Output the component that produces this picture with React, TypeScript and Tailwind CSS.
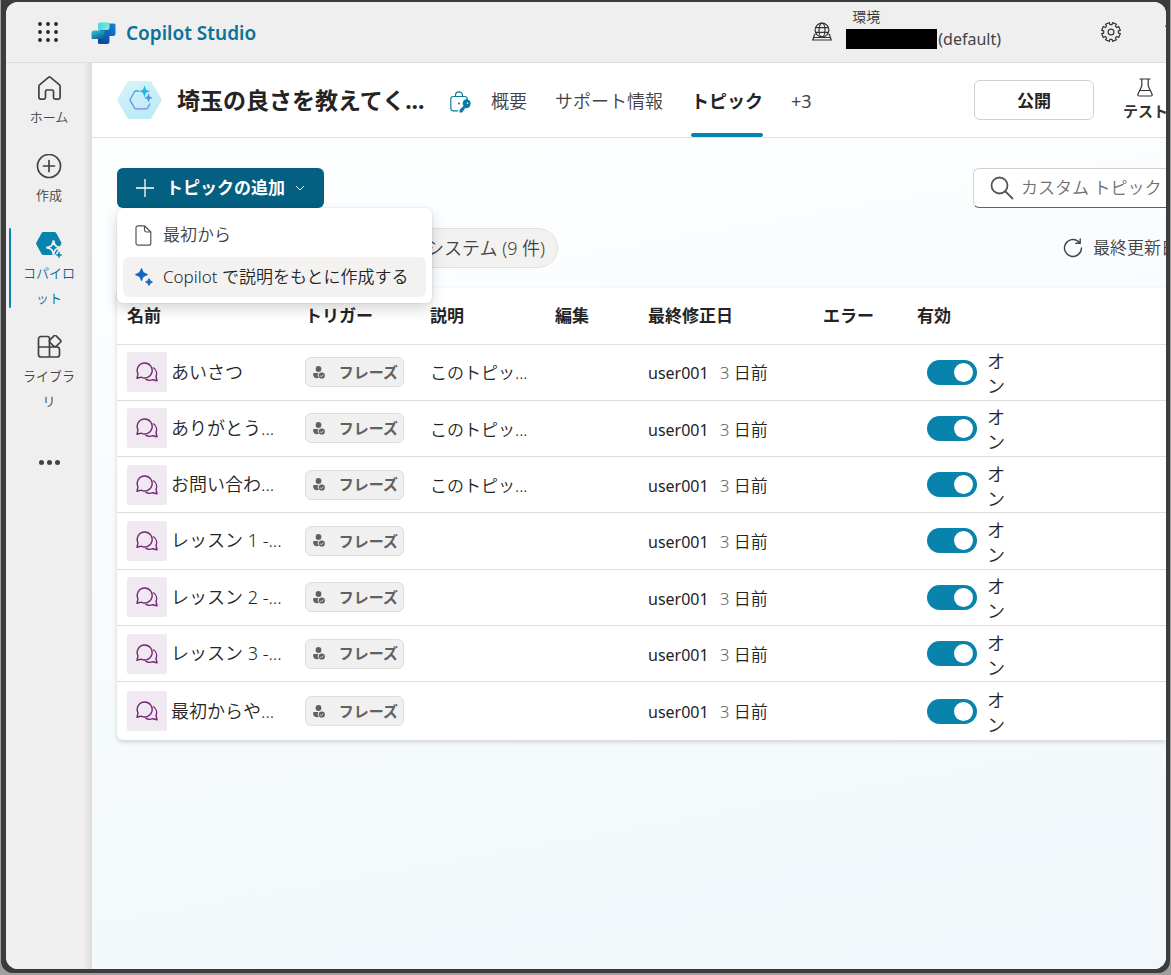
import type { ReactNode } from "react";

const topics = [
  { name: "あいさつ", description: "このトピッ..." },
  { name: "ありがとう...", description: "このトピッ..." },
  { name: "お問い合わ...", description: "このトピッ..." },
  { name: "レッスン 1 -...", description: "" },
  { name: "レッスン 2 -...", description: "" },
  { name: "レッスン 3 -...", description: "" },
  { name: "最初からや...", description: "" },
];

const WaffleIcon = () => (
  <svg width="20" height="20" viewBox="0 0 20 20" fill="#242424">
    {[2, 10, 18].map((y) =>
      [2, 10, 18].map((x) => <circle key={`${x}-${y}`} cx={x} cy={y} r="1.9" />)
    )}
  </svg>
);

const CopilotStudioLogo = () => (
  <svg width="25" height="23" viewBox="0 0 25 23">
    <defs>
      <linearGradient id="logoTop" x1="0" y1="0" x2="1" y2="0.4">
        <stop offset="0" stopColor="#3fd0ea" />
        <stop offset="1" stopColor="#7cf0c0" />
      </linearGradient>
      <linearGradient id="logoLeft" x1="0" y1="0" x2="0.6" y2="1">
        <stop offset="0" stopColor="#2fc3e0" />
        <stop offset="1" stopColor="#0b6a94" />
      </linearGradient>
      <linearGradient id="logoBack" x1="1" y1="0" x2="0.3" y2="1">
        <stop offset="0" stopColor="#1784d8" />
        <stop offset="1" stopColor="#0a47a5" />
      </linearGradient>
    </defs>
    <path d="M14 1.500h9A1.500 1.500 0 0 1 24.500 3v8.500a2.500 2.500 0 0 1-2.500 2.500h-3.500v5.500a2.500 2.500 0 0 1-2.500 2.500H8.500A1.500 1.500 0 0 1 7 20.500V11z" fill="url(#logoBack)" />
    <path d="M3 8.500h10.500v5.500a3 3 0 0 1-3 3H1.500A1 1 0 0 1 .5 16v-5A2.500 2.500 0 0 1 3 8.500z" fill="url(#logoLeft)" />
    <path d="M9.500.5h8A1 1 0 0 1 18.500 1.500v4A2.500 2.500 0 0 1 16 8H7V3A2.500 2.500 0 0 1 9.500.5z" fill="url(#logoTop)" />
  </svg>
);

const EnvironmentIcon = () => (
  <svg width="20" height="20" viewBox="0 0 20 20" fill="none" stroke="#333" strokeWidth="1.2">
    <circle cx="10" cy="8" r="6.900" />
    <ellipse cx="10" cy="8" rx="3" ry="6.900" />
    <path d="M3.500 5.700h13M3.500 10.300h13M3.500 12.500h-1L.8 18h18.400l-1.700-5.500h-1M1.500 15.500h17" />
  </svg>
);

// cog outline, built once from polar points
const cogPath = Array.from({ length: 8 }, (_, i) => {
  const at = (deg: number, r: number) => {
    const a = ((i * 45 + deg) * Math.PI) / 180;
    return `${(10 + r * Math.cos(a)).toFixed(2)} ${(10 + r * Math.sin(a)).toFixed(2)}`;
  };
  return `${i === 0 ? "M" : "L"}${at(-13, 9.5)}L${at(13, 9.5)}L${at(14, 7.4)}L${at(31, 7.4)}`;
}).join("") + "Z";

const GearIcon = () => (
  <svg width="20" height="20" viewBox="0 0 20 20" fill="none" stroke="#333" strokeWidth="1.2" strokeLinejoin="round">
    <path d={cogPath} transform="rotate(22.5 10 10)" />
    <circle cx="10" cy="10" r="2.900" />
  </svg>
);

const HelpIcon = () => (
  <svg width="20" height="20" viewBox="0 0 20 20" fill="none" stroke="#333" strokeWidth="1.2">
    <path d="M.8 5C1.500 1.500 4 .8 7 .8s6 1.200 6 4.700-4 4-5 7.500" />
  </svg>
);

const HomeIcon = () => (
  <svg width="25" height="25" viewBox="0 0 25 25" fill="none" stroke="#424242" strokeWidth="1.7" strokeLinejoin="round">
    <path d="M11.500 1.400a1.500 1.500 0 0 1 2 0l8.700 7.200c.6.500.9 1.100.9 1.800v11.200a1.600 1.600 0 0 1-1.600 1.600h-3.400a1.600 1.600 0 0 1-1.600-1.600v-6.200a1.400 1.400 0 0 0-1.400-1.400H9.900a1.400 1.400 0 0 0-1.400 1.400v6.200a1.600 1.600 0 0 1-1.600 1.600H3.500a1.600 1.600 0 0 1-1.600-1.600V10.400c0-.7.3-1.300.9-1.800z" />
  </svg>
);

const CreateIcon = () => (
  <svg width="26" height="25" viewBox="0 0 26 25" fill="none" stroke="#424242" strokeWidth="1.7" strokeLinecap="round">
    <circle cx="13" cy="12" r="11.500" />
    <path d="M13 6.500v11M7.500 12h11" />
  </svg>
);

const CopilotIcon = () => (
  <svg width="26" height="26" viewBox="0 0 26 26" fill="#0883ac">
    <path d="M7.300 0h11.200c.7 0 1.300.4 1.700 1l5 9.200c.3.600.3 1.200 0 1.800l-5.500 10c-.4.700-1 1-1.700 1H7.300c-.7 0-1.300-.3-1.700-1L.4 12.500a2 2 0 0 1 0-2L5.600 1c.4-.6 1-1 1.700-1z" />
    <path d="M17.500 8.500c.9 5.200 1.900 6.200 7.200 7.200-5.300 1-6.300 2-7.200 7.200-.9-5.200-1.900-6.200-7.200-7.200 5.300-1 6.300-2 7.200-7.200z" stroke="#efefef" strokeWidth="1.800" />
    <path d="M23 19.500c.4 2.500.9 3 3 3.500-2.100.5-2.600 1-3 3.500-.4-2.500-.9-3-3-3.500 2.100-.5 2.600-1 3-3.500z" stroke="#0883ac" strokeWidth=".5" />
  </svg>
);

const LibraryIcon = () => (
  <svg width="25" height="25" viewBox="0 0 25 25" fill="none" stroke="#424242" strokeWidth="1.700" strokeLinejoin="round">
    <path d="M12.500 12V3.500A2 2 0 0 0 10.500 1.500h-6.500a2.500 2.500 0 0 0-2.500 2.500V19.500A2.500 2.500 0 0 0 4 22h16a2.500 2.500 0 0 0 2.500-2.500v-5a2.500 2.500 0 0 0-2.500-2.500zM1.500 12h11M12.500 12v10" />
    <path d="M17.200.6a1.200 1.200 0 0 1 1.700 0l4.700 4.700a1.200 1.200 0 0 1 0 1.700l-4.700 4.700h-1.700l-4.700-4.700V5.300z" />
  </svg>
);

const AgentIcon = () => (
  <svg width="45" height="38" viewBox="0 0 45 38" fill="none">
    <defs>
      <linearGradient id="hexFill" x1="0" y1="0" x2="0.4" y2="1">
        <stop offset="0" stopColor="#d9f2f8" />
        <stop offset="1" stopColor="#bdebf9" />
      </linearGradient>
      <linearGradient id="hexLine" x1="0" y1="0" x2="0.3" y2="1">
        <stop offset="0" stopColor="#27b4e0" />
        <stop offset="1" stopColor="#7a7fee" />
      </linearGradient>
    </defs>
    <path d="M12.500 0h20c1 0 1.700.4 2.200 1.200l9.500 16.300c.5.900.5 1.900 0 2.800l-9.500 16.400c-.5.900-1.200 1.300-2.200 1.300h-20c-1 0-1.700-.4-2.200-1.300L.8 20.300a2.600 2.600 0 0 1 0-2.800L10.300 1.200C10.800.4 11.500 0 12.500 0z" fill="url(#hexFill)" />
    <path d="M22 10h-3.200c-.6 0-1 .3-1.300.8L13.300 18c-.3.600-.3 1.200 0 1.700l4.200 7.300c.3.600.8.800 1.300.8h10.500c.6 0 1-.2 1.300-.8l2.500-4.500" stroke="url(#hexLine)" strokeWidth="1.300" />
    <path d="M27.500 5c.7 3.800 1.600 4.700 5 5.300-3.400.6-4.300 1.500-5 5.300-.7-3.800-1.600-4.700-5-5.300 3.400-.6 4.300-1.500 5-5.300z" fill="#22b2de" stroke="#22b2de" strokeWidth=".6" />
    <path d="M31.500 12.800c.5 2.700 1.200 3.500 3.700 4-2.500.5-3.200 1.300-3.700 4-.5-2.700-1.200-3.500-3.700-4 2.500-.5 3.200-1.300 3.700-4z" fill="#4a95ea" stroke="#4a95ea" strokeWidth=".6" />
  </svg>
);

const LockKeyIcon = () => (
  <svg width="21" height="22" viewBox="0 0 21 22" fill="none" stroke="#0b7ba2" strokeWidth="1.200">
    <path d="M17.300 9V8a2.500 2.500 0 0 0-2.500-2.500H3.300A2.500 2.500 0 0 0 .8 8v9.300a2.500 2.500 0 0 0 2.500 2.500H8" />
    <path d="M5.500 5.500V4.400a3.500 3.500 0 0 1 7 0v1.100" />
    <circle cx="9" cy="12.500" r="1.100" fill="#0b7ba2" stroke="none" />
    <path d="M20.500 13.200a4 4 0 0 1-5.200 3.800l-1 1.100v1.300h-1.500v1.300l-.9.900H9.500v-2.700l4.100-4.100a4 4 0 1 1 6.900-1.600z" fill="#0b7ba2" stroke="none" />
    <circle cx="17.500" cy="12.300" r=".8" fill="#fff" stroke="none" />
  </svg>
);

const FlaskIcon = () => (
  <svg width="16" height="19" viewBox="0 0 16 19" fill="none" stroke="#333" strokeWidth="1.200" strokeLinejoin="round">
    <path d="M2.500 1h11M4.800 1v7L1 16c-.5 1.200.1 2 1.200 2h11.600c1.100 0 1.700-.8 1.200-2L11.200 8V1M3 12.500h10" />
  </svg>
);

const FileIcon = () => (
  <svg width="17" height="21" viewBox="0 0 17 21" fill="none" stroke="#555" strokeWidth="1.200" strokeLinejoin="round">
    <path d="M3 .8h6.500L15.800 7v11.200a2 2 0 0 1-2 2H3a2 2 0 0 1-2-2V2.800a2 2 0 0 1 2-2zM9.500.8v4.200a2 2 0 0 0 2 2h4.300" />
  </svg>
);

const SparkleIcon = () => (
  <svg width="18" height="18" viewBox="0 0 18 18" fill="#1168c4" stroke="#1168c4" strokeWidth="1.200" strokeLinejoin="round">
    <path d="M6.500.8c1.300 4.100 1.800 4.500 5.700 5.800-3.900 1.300-4.400 1.700-5.700 5.800C5.200 8.300 4.700 7.900.8 6.600 4.700 5.300 5.200 4.900 6.500.8z" />
    <path d="M14 10.800c.7 2.300.9 2.500 3.200 3.200-2.300.7-2.500.9-3.200 3.200-.7-2.300-.9-2.500-3.200-3.200 2.300-.7 2.500-.9 3.200-3.200z" />
  </svg>
);

const TopicIcon = () => (
  <svg width="22" height="20" viewBox="0 0 22 20" fill="none" stroke="#742774" strokeWidth="1.400" strokeLinejoin="round">
    <path d="M8.700 1a7.500 7.500 0 1 1-3.600 14.100L1 16.200l1-4.300A7.500 7.500 0 0 1 8.700 1z" />
    <path d="M17 5.500a7.300 7.300 0 0 1 3 9l1 4.200-4.200-1a8 8 0 0 1-7.300-.5" />
  </svg>
);

const PhraseIcon = () => (
  <svg width="12" height="13" viewBox="0 0 12 13" fill="#616161">
    <circle cx="5.500" cy="3" r="2.900" />
    <path d="M1.200 7h4.400a3.600 3.600 0 0 0 .5 5c-4 .6-6-.8-6-3.500A1.300 1.300 0 0 1 1.200 7z" />
    <circle cx="8.800" cy="9.500" r="3.100" />
    <path d="M7.200 9.800l1.200.9 2-2" stroke="#efefef" strokeWidth=".8" fill="none" />
  </svg>
);

const NavItem = ({ icon, label, active }: { icon: ReactNode; label: string; active?: boolean }) => (
  <li className="relative">
    {active && <span className="absolute -top-1 left-[3px] h-20 w-0.5 rounded-full bg-[#0883ac]" />}
    <a href="#" className={`flex flex-col items-center gap-1 ${active ? "text-[#0b6a8c]" : "text-[#424242]"}`}>
      <span className="flex h-[25px] items-center">{icon}</span>
      <span className="w-[54px] text-center text-[13px] leading-[25px] break-all">{label}</span>
    </a>
  </li>
);

const TopBar = () => (
  <header className="flex h-[61px] items-center border-b border-[#dedede] bg-[#efefef] pl-8">
    <button aria-label="アプリ起動ツール"><WaffleIcon /></button>
    <a href="#" className="ml-[33px] flex items-center gap-2.5 pt-0.5 text-[19px] font-semibold text-[#0b7299]">
      <CopilotStudioLogo />
      Copilot Studio
    </a>
    <button className="ml-auto flex items-center gap-3.5 text-left text-[#424242]">
      <EnvironmentIcon />
      <span className="block pb-2.5">
        <span className="block pl-1.5 text-[14px] leading-6 text-[#333]">環境</span>
        <span className="flex items-center text-[16px] leading-5 font-normal">
          <span className="mr-px h-5 w-[91px] bg-black" />
          (default)
        </span>
      </span>
    </button>
    <button aria-label="設定" className="ml-[100px]"><GearIcon /></button>
    <button aria-label="ヘルプ" className="ml-11 -mr-[19px] shrink-0"><HelpIcon /></button>
  </header>
);

const SideNav = () => (
  <nav className="w-[86px] shrink-0 bg-gradient-to-r from-[#efefef] from-90% to-[#dcdcdc] pt-[13px]">
    <ul className="flex flex-col gap-6">
      <NavItem icon={<HomeIcon />} label="ホーム" />
      <NavItem icon={<CreateIcon />} label="作成" />
      <NavItem icon={<CopilotIcon />} label="コパイロット" active />
      <NavItem icon={<LibraryIcon />} label="ライブラリ" />
    </ul>
    <button aria-label="その他" className="mx-auto mt-9 flex h-[25px] items-center gap-[3px]">
      <span className="size-[5px] rounded-full bg-[#424242]" />
      <span className="size-[5px] rounded-full bg-[#424242]" />
      <span className="size-[5px] rounded-full bg-[#424242]" />
    </button>
  </nav>
);

const AgentHeader = () => (
  <div className="flex h-[75px] items-center border-b border-[#e0e0e0] bg-white pl-[25px]">
    <AgentIcon />
    <h1 className="ml-[15px] w-[257px] shrink-0 text-[23px] font-bold whitespace-nowrap text-[#242424]">
      埼玉の良さを教えてく...
    </h1>
    <span className="ml-4 shrink-0 pt-1"><LockKeyIcon /></span>
    <ul className="ml-5 flex shrink-0 items-center gap-7 self-stretch pt-[3px] text-[18px] text-[#424242]">
      <li><a href="#">概要</a></li>
      <li><a href="#">サポート情報</a></li>
      <li className="flex self-stretch">
        <a href="#" aria-current="page" className="relative flex items-center font-bold text-[#242424]">
          トピック
          <span className="absolute inset-x-0 bottom-0 h-1 rounded-full bg-[#0883ac]" />
        </a>
      </li>
      <li><button className="font-normal">+3</button></li>
    </ul>
    <button className="ml-auto h-10 w-[120px] shrink-0 rounded-md border border-[#d1d1d1] bg-white pt-0.5 text-[17px] font-bold text-[#242424]">
      公開
    </button>
    <button className="ml-[29px] -mr-0.5 flex shrink-0 flex-col items-center pt-[3px] text-[15px] leading-7 font-semibold text-[#333]">
      <FlaskIcon />
      テスト
    </button>
  </div>
);

const AddTopicMenu = () => (
  <div className="relative">
    <button
      aria-haspopup="menu"
      aria-expanded="true"
      className="flex h-10 w-[207px] items-center rounded-md bg-[#045f80] pl-[19px] text-[17px] font-bold whitespace-nowrap text-white"
    >
      <svg width="18" height="18" viewBox="0 0 18 18" stroke="#fff" strokeWidth="1.300" className="mr-3">
        <path d="M9 0v18M0 9h18" />
      </svg>
      トピックの追加
      <svg width="10" height="6" viewBox="0 0 10 6" fill="none" stroke="#fff" className="ml-2.5">
        <path d="M1 1l4 4 4-4" />
      </svg>
    </button>
    <div
      role="menu"
      className="absolute top-full left-0 z-10 flex w-[315px] flex-col gap-0.5 rounded-md bg-white p-1.5 pt-[7px] text-[17px] shadow-[0_6px_14px_rgba(0,0,0,0.16),0_0_2px_rgba(0,0,0,0.14)]"
    >
      <button role="menuitem" className="flex h-10 items-center gap-[11px] rounded-md pl-3 text-[#424242]">
        <FileIcon />
        最初から
      </button>
      <button role="menuitem" className="flex h-10 items-center gap-2.5 rounded-md bg-[#f3f2f1] pl-3 whitespace-nowrap text-[#242424]">
        <SparkleIcon />
        Copilot で説明をもとに作成する
      </button>
    </div>
  </div>
);

const TopicTable = () => (
  <table className="mt-5 h-[452px] w-full table-fixed rounded-l-md bg-white text-left text-[17px] text-[#242424] shadow-[0_2px_5px_rgba(0,0,0,0.16)]">
    <colgroup>
      <col className="w-[178px]" />
      <col className="w-[125px]" />
      <col className="w-[125px]" />
      <col className="w-[93px]" />
      <col className="w-[175px]" />
      <col className="w-[94px]" />
      <col />
    </colgroup>
    <thead>
      <tr className="h-14 border-b border-[#e0e0e0]">
        <th className="pl-2.5">名前</th>
        <th className="pl-2.5">トリガー</th>
        <th className="pl-2.5">説明</th>
        <th className="pl-2.5">編集</th>
        <th className="pl-2.5">最終修正日</th>
        <th className="pl-2.5">エラー</th>
        <th className="pl-2.5">有効</th>
      </tr>
    </thead>
    <tbody>
      {topics.map((topic) => (
        <tr key={topic.name} className="h-14 border-b border-[#dedede] last:h-[58px] last:border-b-0">
          <td className="pl-2.5">
            <a href="#" className="flex items-center gap-1 text-[18px] whitespace-nowrap">
              <span className="flex size-10 items-center justify-center rounded-xs bg-[#f1e9f1]">
                <TopicIcon />
              </span>
              {topic.name}
            </a>
          </td>
          <td className="pl-2.5">
            <span className="flex h-[30px] w-[99px] items-center justify-between rounded-md border border-[#dedede] bg-[#f0f0f0] pr-[5px] pl-[7px] text-[15px] font-semibold text-[#616161]">
              <PhraseIcon />
              フレーズ
            </span>
          </td>
          <td className="pt-0.5 pl-2.5 whitespace-nowrap">{topic.description}</td>
          <td />
          <td className="pt-0.5 pl-2.5 whitespace-nowrap">
            <span className="text-[16px] font-normal">user001</span>
            <span className="ml-[11px]"><span className="text-[#616161]">3</span> 日前</span>
          </td>
          <td />
          <td className="pl-5">
            <label className="flex items-center gap-2.5">
              <input
                type="checkbox"
                role="switch"
                defaultChecked
                className="flex h-[25px] w-[50px] shrink-0 appearance-none items-center rounded-full bg-[#8a8a8a] px-1 before:size-[19px] before:rounded-full before:bg-white checked:justify-end checked:bg-[#0883ac]"
              />
              <span className="w-[18px] pt-1 text-[18px] leading-[25px] break-all">オン</span>
            </label>
          </td>
        </tr>
      ))}
    </tbody>
  </table>
);

const App = () => {
  return (
    <div
      lang="ja"
      className="flex min-h-screen bg-[#a0a0a0] px-px pb-0.5 font-['Noto_Sans','Noto_Sans_CJK_JP',sans-serif] font-[350]"
    >
      <div className="flex min-w-0 grow rounded-b-xl bg-[#3b3c3c] pt-0.5 pr-1 pb-1 pl-[5px]">
        <div className="flex min-w-0 grow flex-col overflow-hidden rounded-xl bg-[#efefef]">
          <TopBar />
          <div className="flex grow">
            <SideNav />
            <main className="min-w-0 grow bg-linear-170 from-white via-[#f7fbfe] to-[#f1f7fa]">
              <AgentHeader />
              <section className="pt-[30px] pl-[25px]">
                <div className="flex items-start justify-between">
                  <AddTopicMenu />
                  <label className="flex h-10 w-[193px] items-center gap-[7px] overflow-hidden rounded-l-md border border-r-0 border-[#d1d1d1] border-b-[#616161] bg-white pl-4">
                    <svg width="24" height="24" viewBox="0 0 24 24" fill="none" stroke="#555" strokeWidth="1.800" strokeLinecap="round" className="shrink-0">
                      <circle cx="9.500" cy="9.500" r="8" />
                      <path d="M15.500 15.500l7 7" />
                    </svg>
                    <input
                      type="text"
                      aria-label="トピックの検索"
                      placeholder="カスタム トピック"
                      className="w-full min-w-0 text-[17px] outline-none placeholder:text-[#707070]"
                    />
                  </label>
                </div>
                <div className="mt-5 flex items-center justify-between">
                  <button className="ml-[296px] h-10 rounded-full border border-[#e0e0e0] bg-[#f3f2f1] px-3 text-[18px] text-[#424242]">
                    システム (9 件)
                  </button>
                  <button className="flex w-[103px] items-center gap-2.5 overflow-hidden text-[17px] whitespace-nowrap text-[#424242]">
                    <svg width="20" height="20" viewBox="0 0 20 20" fill="none" stroke="#424242" strokeWidth="1.400" strokeLinecap="round" className="shrink-0">
                      <path d="M18.500 10a8.500 8.500 0 1 1-3-6.500l1.500 1.500M17.200 1v4.300h-4.300" />
                    </svg>
                    最終更新日
                  </button>
                </div>
                <TopicTable />
              </section>
            </main>
          </div>
        </div>
      </div>
    </div>
  );
};

export default App;
